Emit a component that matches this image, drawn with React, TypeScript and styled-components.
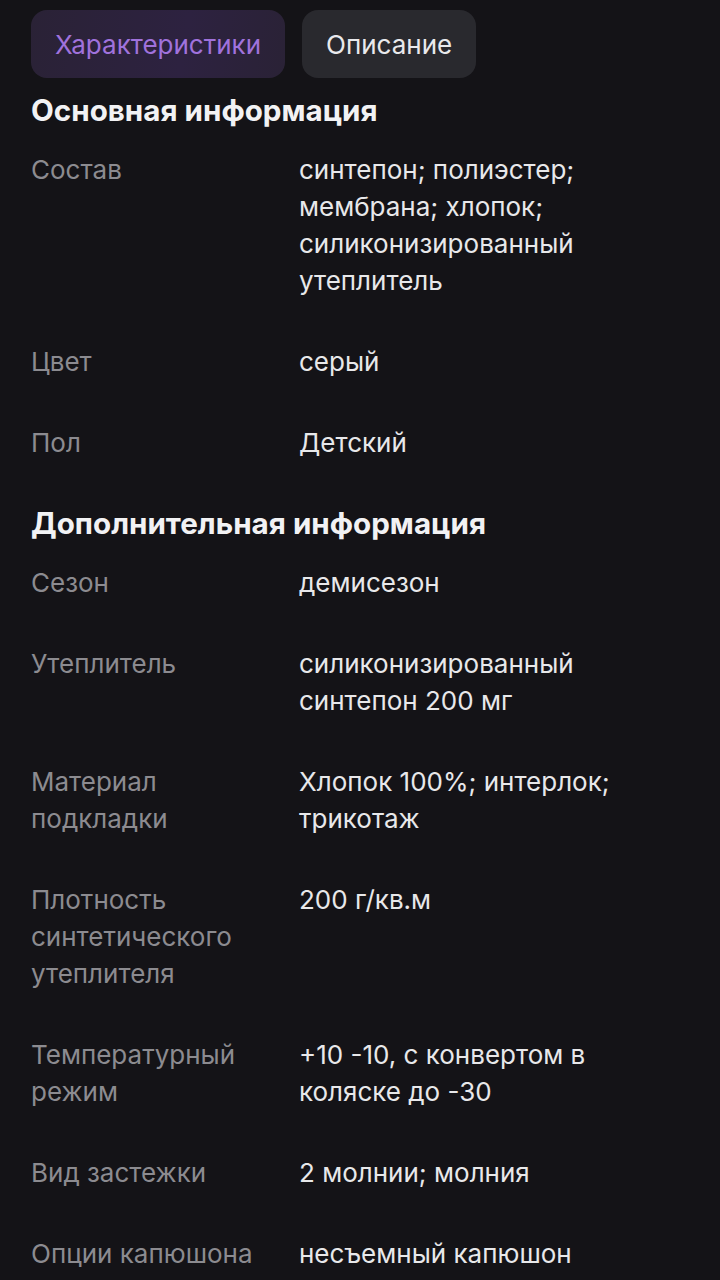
import React from "react";
import styled, { createGlobalStyle } from "styled-components";

const Global = createGlobalStyle`
  html, body { margin: 0; padding: 0; background: #141317; }
  body { font-family: Inter, "Liberation Sans", sans-serif; -webkit-font-smoothing: antialiased; }
`;

const Page = styled.div`
  background: #141317;
  min-height: 1280px;
  padding: 10px 31px 0 31px;
  box-sizing: border-box;
`;

const Tabs = styled.div`
  display: flex;
  gap: 17px;
  margin-bottom: 14px;
`;

const Tab = styled.div<{ $active?: boolean }>`
  height: 68px;
  padding: 0 24px;
  border-radius: 16px;
  display: flex;
  align-items: center;
  font-size: 26px;
  background: ${(p) =>
    p.$active ? "linear-gradient(100deg, #2a2236 0%, #2d2240 60%, #2a2236 100%)" : "#29292e"};
  color: ${(p) => (p.$active ? "#a072dc" : "#e9e9ec")};
`;

const Heading = styled.h2`
  margin: 0 0 22px 0;
  font-size: 29.6px;
  line-height: 37px;
  font-weight: 700;
  color: #f2f2f4;
`;

const Row = styled.div`
  display: grid;
  grid-template-columns: 268px 1fr;
  font-size: 26px;
  line-height: 37px;
  margin-bottom: 44px;
`;

const Label = styled.div`
  color: #8c8b90;
`;

const Value = styled.div`
  color: #e8e8ea;
`;

type Item = { label: string[]; value: string[] };

const main: Item[] = [
  { label: ["Состав"], value: ["синтепон; полиэстер;", "мембрана; хлопок;", "силиконизированный", "утеплитель"] },
  { label: ["Цвет"], value: ["серый"] },
  { label: ["Пол"], value: ["Детский"] },
];

const extra: Item[] = [
  { label: ["Сезон"], value: ["демисезон"] },
  { label: ["Утеплитель"], value: ["силиконизированный", "синтепон 200 мг"] },
  { label: ["Материал", "подкладки"], value: ["Хлопок 100%; интерлок;", "трикотаж"] },
  { label: ["Плотность", "синтетического", "утеплителя"], value: ["200 г/кв.м"] },
  { label: ["Температурный", "режим"], value: ["+10 -10, с конвертом в", "коляске до -30"] },
  { label: ["Вид застежки"], value: ["2 молнии; молния"] },
  { label: ["Опции капюшона"], value: ["несъемный капюшон"] },
];

const Lines: React.FC<{ lines: string[] }> = ({ lines }) => (
  <>
    {lines.map((l, i) => (
      <React.Fragment key={i}>
        {l}
        {i < lines.length - 1 && <br />}
      </React.Fragment>
    ))}
  </>
);

const Section: React.FC<{ title: string; items: Item[] }> = ({ title, items }) => (
  <section>
    <Heading>{title}</Heading>
    {items.map((it) => (
      <Row key={it.label.join(" ")}>
        <Label>
          <Lines lines={it.label} />
        </Label>
        <Value>
          <Lines lines={it.value} />
        </Value>
      </Row>
    ))}
  </section>
);

export default function App() {
  return (
    <>
      <Global />
      <Page>
        <Tabs>
          <Tab $active>Характеристики</Tab>
          <Tab>Описание</Tab>
        </Tabs>
        <Section title="Основная информация" items={main} />
        <Section title="Дополнительная информация" items={extra} />
      </Page>
    </>
  );
}
